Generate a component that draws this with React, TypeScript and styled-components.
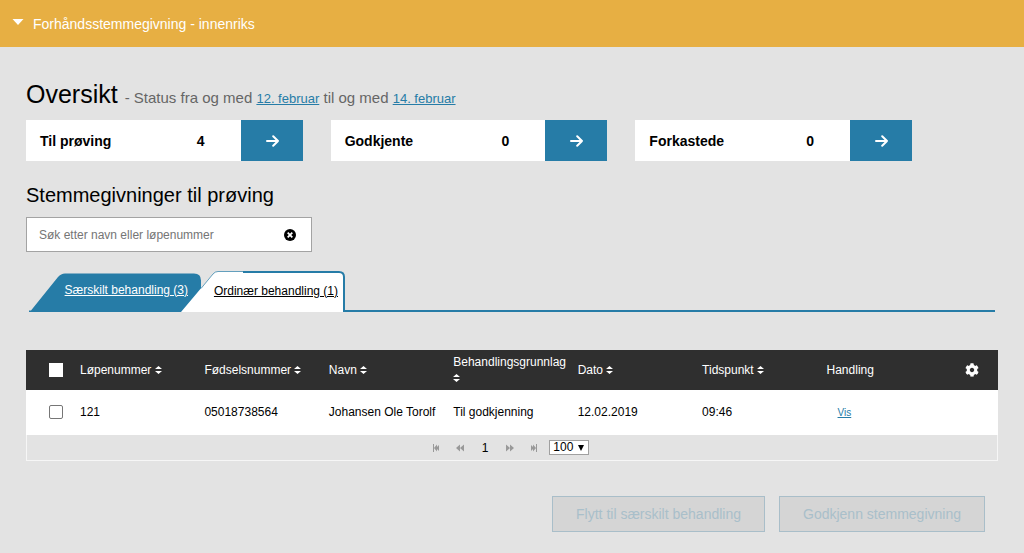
import React, { useState } from "react";
import styled, { createGlobalStyle, css } from "styled-components";

const BLUE = "#267ca7";

const GlobalStyle = createGlobalStyle`
  * { box-sizing: border-box; }
  html { background: #e3e3e3; }
  body {
    margin: 0;
    background: #e3e3e3;
    color: #000;
    font-family: "Liberation Sans", Arial, Helvetica, sans-serif;
    font-size: 12px;
    line-height: 16px;
  }
  h1, h2, p { margin: 0; font-weight: normal; }
  button, input, select { font-family: inherit; }
  button { cursor: pointer; }
`;

const TopBar = styled.header`
  background: #e7af43;
  padding: 16px 12px 15px;
`;

const TopBarToggle = styled.button`
  display: flex;
  align-items: center;
  gap: 9px;
  padding: 0;
  border: 0;
  background: none;
  color: #fff;
  font-size: 14px;
  line-height: 16px;

  svg { margin-bottom: 4px; }
`;

const Main = styled.main`
  padding: 31px 26px 20px;
`;

const TitleRow = styled.div`
  display: flex;
  align-items: baseline;
  gap: 7px;
`;

const Title = styled.h1`
  font-size: 25px;
  line-height: 32px;
`;

const Status = styled.p`
  color: #666;
  font-size: 15px;
`;

const Link = styled.a<{ $small?: boolean }>`
  color: ${BLUE};
  font-size: 13px;
  text-decoration: underline;
  ${(p) => p.$small && css`font-size: 10px; margin-left: 11px;`}
`;

const Cards = styled.div`
  display: grid;
  grid-template-columns: repeat(3, 1fr);
  gap: 28px;
  margin-top: 10px;
  padding-right: 86px;
`;

const Card = styled.section`
  display: flex;
  align-items: stretch;
  height: 41px;
  background: #fff;
  font-size: 14px;
  font-weight: bold;
`;

const CardLabel = styled.span`
  flex: 1;
  align-self: center;
  padding-left: 14px;
`;

const CardCount = styled.span`
  align-self: center;
  padding-right: 36px;
`;

const CardButton = styled.button`
  display: flex;
  align-items: center;
  justify-content: center;
  width: 62px;
  padding: 0 0 0 2px;
  border: 0;
  background: ${BLUE};
`;

const SectionTitle = styled.h2`
  margin-top: 22px;
  font-size: 20px;
  line-height: 24px;
`;

const SearchBox = styled.div`
  display: flex;
  align-items: center;
  width: 286px;
  height: 35px;
  margin-top: 10px;
  padding: 0 15px 0 12px;
  border: 1px solid #a3a3a3;
  background: #fff;
`;

const SearchInput = styled.input`
  flex: 1;
  min-width: 0;
  padding: 0;
  border: 0;
  outline: 0;
  background: none;
  font-size: 12px;
  &::placeholder { color: #757575; opacity: 1; }
`;

const IconButton = styled.button`
  display: inline-flex;
  align-items: center;
  justify-content: center;
  padding: 0;
  border: 0;
  background: none;
  color: inherit;
  vertical-align: middle;
`;

const Tabs = styled.div`
  display: flex;
  align-items: flex-end;
  height: 41px;
  margin: 19px 3px 0;
`;

const TabShape = styled.svg`
  position: absolute;
  left: 0;
  bottom: 0;
`;

const Tab = styled.button<{ $active?: boolean }>`
  position: relative;
  width: ${(p) => (p.$active ? 164 : 172)}px;
  height: 41px;
  margin-left: ${(p) => (p.$active ? -20 : 0)}px;
  padding: ${(p) => (p.$active ? "0 7px 2px 0" : "0 13px 4px 0")};
  border: 0;
  background: none;
  color: ${(p) => (p.$active ? "#000" : "#fff")};
  font-size: 12px;
  text-align: right;
  text-decoration: underline;
  white-space: nowrap;
`;

const TabText = styled.span`
  position: relative;
`;

const TabLine = styled.div`
  flex: 1;
  height: 2px;
  background: ${BLUE};
`;

const TableFrame = styled.div`
  margin-top: 38px;
  border: 1px solid #f6f6f6;
  border-width: 0 0 1px;
`;

const Table = styled.table`
  width: 100%;
  table-layout: fixed;
  border-collapse: collapse;
`;

const Cell = css`
  padding: 0 10px 1px 9px;
  text-align: left;
  font-weight: normal;
  white-space: nowrap;
`;

const Th = styled.th<{ $width?: number; $wrap?: boolean; $center?: boolean }>`
  ${Cell}
  width: ${(p) => (p.$width ? `${p.$width}px` : "auto")};
  height: 40px;
  background: #2f2f2f;
  color: #fff;
  ${(p) => p.$wrap && css`white-space: normal;`}
  ${(p) => p.$center && css`padding: 0 0 1px 4px; text-align: center;`}
`;

const Td = styled.td`
  ${Cell}
  height: 45px;
  background: #fff;
`;

const SortButton = styled(IconButton)`
  width: 7px;
`;

const Check = styled.input<{ $head?: boolean }>`
  appearance: none;
  display: block;
  width: 14px;
  height: 14px;
  margin: 0 0 0 14px;
  border: 1px solid ${(p) => (p.$head ? "#fff" : "#767676")};
  border-radius: ${(p) => (p.$head ? 0 : 2)}px;
  background: #fff;
  &:checked { background: ${BLUE}; }
`;

const Pager = styled.nav`
  display: flex;
  align-items: center;
  justify-content: center;
  gap: 16px;
  height: 25px;
  padding-right: 3px;
  border: 1px solid #f6f6f6;
  border-width: 0 1px;
  color: #999;
`;

const PageNumber = styled.span`
  color: #000;
  margin: 0 2px;
`;

const SelectWrap = styled.label`
  position: relative;
  display: flex;
  margin-left: -5px;
  color: #000;

  svg { position: absolute; right: 5px; top: 5px; pointer-events: none; }
`;

const PageSize = styled.select`
  appearance: none;
  width: 40px;
  height: 15px;
  padding: 0 0 0 3px;
  border: 1px solid #a0a0a0;
  border-radius: 0;
  background: #fff;
  color: #000;
  font-size: 12px;
  line-height: 13px;
`;

const Actions = styled.div`
  display: flex;
  justify-content: flex-end;
  gap: 14px;
  margin-top: 35px;
  padding-right: 13px;
`;

const ActionButton = styled.button`
  height: 36px;
  padding: 0 23px;
  border: 1px solid #a9bec9;
  background: #d5d5d5;
  color: #a9bfca;
  font-size: 14px;
  cursor: default;
`;

const Arrow = () => (
  <svg width="14" height="12" viewBox="0 0 14 12" fill="none" stroke="#fff" strokeWidth="2">
    <path d="M1 6h11M7.2 1.2 12 6l-4.8 4.8" strokeLinecap="round" strokeLinejoin="round" />
  </svg>
);

const SortIcon = () => (
  <svg width="7" height="8" viewBox="0 0 7 8" fill="currentColor">
    <path d="M0 3 3.5 0 7 3zM0 5h7L3.5 8z" />
  </svg>
);

const GearIcon = () => (
  <svg width="14" height="14" viewBox="0 0 512 512" fill="currentColor">
    <path d="M487.4 315.7l-42.600-24.600c4.300-23.200 4.300-47 0-70.200l42.600-24.600c4.900-2.800 7.100-8.600 5.500-14-11.100-35.600-30-67.800-54.700-94.600-3.800-4.100-10-5.100-14.800-2.300L380.800 110c-17.900-15.400-38.500-27.300-60.800-35.100V25.800c0-5.600-3.900-10.500-9.400-11.700-36.700-8.200-74.300-7.800-109.200 0-5.500 1.200-9.400 6.100-9.400 11.700V75c-22.200 7.900-42.800 19.800-60.800 35.100L88.700 85.500c-4.900-2.800-11-1.900-14.800 2.300-24.700 26.700-43.600 58.900-54.700 94.600-1.700 5.400.6 11.200 5.500 14L67.300 221c-4.300 23.200-4.300 47 0 70.200l-42.600 24.600c-4.900 2.800-7.100 8.600-5.500 14 11.100 35.600 30 67.800 54.700 94.600 3.800 4.100 10 5.100 14.800 2.300l42.600-24.600c17.900 15.400 38.500 27.300 60.800 35.100v49.200c0 5.600 3.900 10.500 9.400 11.700 36.700 8.200 74.300 7.800 109.200 0 5.500-1.200 9.400-6.100 9.400-11.700v-49.200c22.200-7.900 42.800-19.800 60.800-35.100l42.600 24.600c4.900 2.800 11 1.900 14.800-2.300 24.700-26.700 43.600-58.900 54.700-94.600 1.500-5.500-.7-11.300-5.600-14.100zM256 336c-44.100 0-80-35.900-80-80s35.900-80 80-80 80 35.900 80 80-35.900 80-80 80z" />
  </svg>
);

const pagerPaths = {
  first: "M1 0h1v8H1zM2 4l3-3.500v2.500l2-2v6l-2-2v2.500z",
  prev: "M4 0.500v7L0 4zM8 0.500v7L4 4z",
  next: "M0 0.500v7L4 4zM4 0.500v7L8 4z",
  last: "M7 0H6v8h1zM6 4L3 0.500v2.500l-2-2v6l2-2v2.500z",
};

const PagerButton = ({ kind, label }: { kind: keyof typeof pagerPaths; label: string }) => (
  <IconButton aria-label={label}>
    <svg width="8" height="8" viewBox="0 0 8 8" fill="currentColor">
      <path d={pagerPaths[kind]} />
    </svg>
  </IconButton>
);

const summary = [
  { label: "Til prøving", count: 4 },
  { label: "Godkjente", count: 0 },
  { label: "Forkastede", count: 0 },
];

const columns = ["Løpenummer", "Fødselsnummer", "Navn", "Behandlingsgrunnlag", "Dato", "Tidspunkt"];

const rows = [["121", "05018738564", "Johansen Ole Torolf", "Til godkjenning", "12.02.2019", "09:46"]];

export default function App() {
  const [query, setQuery] = useState("");

  return (
    <>
      <GlobalStyle />
      <TopBar>
        <TopBarToggle aria-expanded="true">
          <svg width="12" height="6" viewBox="0 0 12 6" fill="#fff">
            <path d="M0.500 0h11L6 6z" />
          </svg>
          Forhåndsstemmegivning - innenriks
        </TopBarToggle>
      </TopBar>
      <Main>
        <TitleRow>
          <Title>Oversikt</Title>
          <Status>
            - Status fra og med <Link href="#fra">12. februar</Link> til og med{" "}
            <Link href="#til">14. februar</Link>
          </Status>
        </TitleRow>

        <Cards>
          {summary.map((item) => (
            <Card key={item.label}>
              <CardLabel>{item.label}</CardLabel>
              <CardCount>{item.count}</CardCount>
              <CardButton aria-label={item.label}>
                <Arrow />
              </CardButton>
            </Card>
          ))}
        </Cards>

        <SectionTitle>Stemmegivninger til prøving</SectionTitle>
        <SearchBox>
          <SearchInput
            type="text"
            aria-label="Søk etter navn eller løpenummer"
            placeholder="Søk etter navn eller løpenummer"
            value={query}
            onChange={(e) => setQuery(e.target.value)}
          />
          <IconButton aria-label="Tøm søk" onClick={() => setQuery("")}>
            <svg width="12" height="12" viewBox="0 0 12 12">
              <circle cx="6" cy="6" r="6" />
              <path d="M3.700 3.700l4.600 4.600M8.300 3.700l-4.600 4.600" stroke="#fff" strokeWidth="1.800" />
            </svg>
          </IconButton>
        </SearchBox>

        <Tabs role="tablist">
          <Tab role="tab" aria-selected="false">
            <TabShape width="172" height="41" viewBox="0 0 172 41" aria-hidden="true">
              <path d="M0 41v-1.500h2L29 6q3-3.500 7-3.500h129q7 0 7 7V41z" fill={BLUE} />
            </TabShape>
            <TabText>Særskilt behandling (3)</TabText>
          </Tab>
          <Tab role="tab" aria-selected="true" $active>
            <TabShape width="164" height="41" viewBox="0 0 164 41" aria-hidden="true">
              <path d="M0 41 32 3q2-2.500 5-2.500h121q5 0 5 5V41z" fill="#fff" />
              <path d="M20 17.500 32 3q2-2.500 5-2.500h25" fill="none" stroke={BLUE} strokeWidth="1" opacity="0.7" />
              <path d="M62 1h96q5 0 5 5v35" fill="none" stroke={BLUE} strokeWidth="2" />
            </TabShape>
            <TabText>Ordinær behandling (1)</TabText>
          </Tab>
          <TabLine />
        </Tabs>

        <TableFrame>
          <Table>
            <thead>
              <tr>
                <Th $width={45}>
                  <Check type="checkbox" aria-label="Velg alle" $head />
                </Th>
                {columns.map((name) => (
                  <Th key={name} $wrap={name === "Behandlingsgrunnlag"}>
                    {name}{" "}
                    <SortButton aria-label={`Sorter ${name}`}>
                      <SortIcon />
                    </SortButton>
                  </Th>
                ))}
                <Th>Handling</Th>
                <Th $width={56} $center>
                  <IconButton aria-label="Innstillinger">
                    <GearIcon />
                  </IconButton>
                </Th>
              </tr>
            </thead>
            <tbody>
              {rows.map((row) => (
                <tr key={row[0]}>
                  <Td>
                    <Check type="checkbox" aria-label={`Velg ${row[0]}`} />
                  </Td>
                  {row.map((value) => (
                    <Td key={value}>{value}</Td>
                  ))}
                  <Td>
                    <Link href="#vis" $small>
                      Vis
                    </Link>
                  </Td>
                  <Td />
                </tr>
              ))}
            </tbody>
          </Table>
          <Pager aria-label="Sider">
            <PagerButton kind="first" label="Første side" />
            <PagerButton kind="prev" label="Forrige side" />
            <PageNumber>1</PageNumber>
            <PagerButton kind="next" label="Neste side" />
            <PagerButton kind="last" label="Siste side" />
            <SelectWrap>
              <PageSize aria-label="Rader per side" defaultValue="100">
                <option value="100">100</option>
              </PageSize>
              <svg width="6" height="6" viewBox="0 0 6 6">
                <path d="M0 0h6L3 6z" />
              </svg>
            </SelectWrap>
          </Pager>
        </TableFrame>

        <Actions>
          <ActionButton disabled>Flytt til særskilt behandling</ActionButton>
          <ActionButton disabled>Godkjenn stemmegivning</ActionButton>
        </Actions>
      </Main>
    </>
  );
}
